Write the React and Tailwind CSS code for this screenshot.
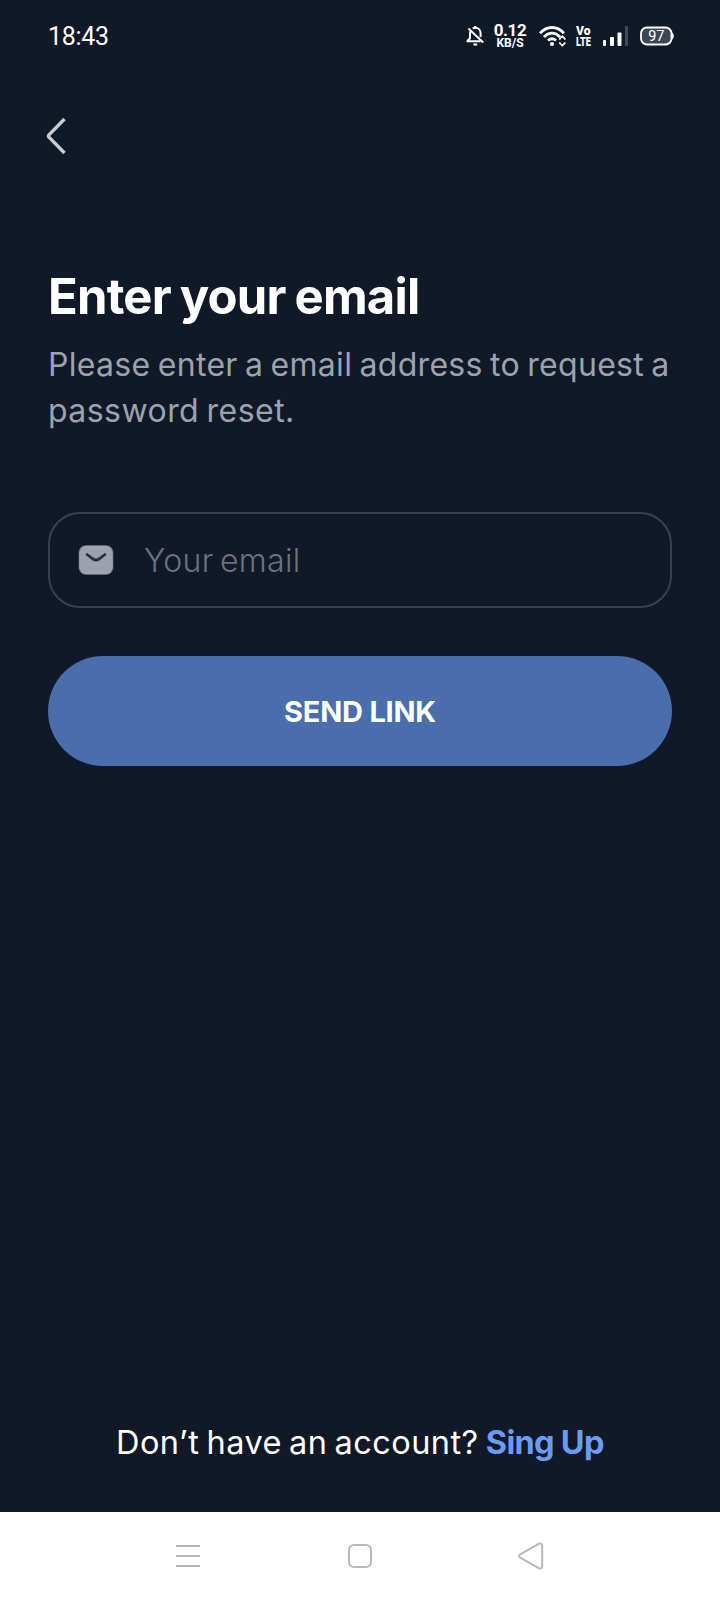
import React from "react";

function StatusBar() {
  return (
    <header className="flex h-[72px] items-center justify-between pr-[46px] pl-12 text-white">
      <span className="text-[25px] leading-none tracking-[-0.3px] font-['Roboto',sans-serif]">18:43</span>
      <div className="flex items-center">
        <svg width="20" height="22" viewBox="0 0 20 22" className="mr-[7px]" fill="none" stroke="white" strokeWidth="2">
          <path d="M4.700 6C4.200 7 4 8 4 9v4.300L1.600 15.600V16.200H14.600M6.800 3.600C7.600 3 8.400 2.800 9.300 2.800C12.500 2.800 14.600 5.200 14.600 8.600V12" />
          <path d="M2.400 3.600L17.200 17.600" />
          <path d="M9.300 1V3M7.400 19.400H11.200" />
        </svg>
        <div className="flex w-[34px] flex-col items-center font-bold font-['Roboto',sans-serif]">
          <span className="text-[17px] leading-[13px] tracking-[-0.4px]">0.12</span>
          <span className="pt-px text-[12px] leading-[10px]">KB/S</span>
        </div>
        <svg width="28" height="22" viewBox="0 0 28 22" className="ml-3" fill="none" stroke="white">
          <path d="M1 8.200C8 .6 18 .6 25 8.200" strokeWidth="2.800" />
          <path d="M5 12C10 6.800 16 6.800 21 12" strokeWidth="2.800" />
          <path d="M9 15.600C11.500 13.200 14.500 13.200 17 15.600" strokeWidth="2.800" />
          <circle cx="13" cy="19" r="2.100" fill="white" stroke="none" />
          <path d="M20.800 14.800V13.600L23.300 11.200L25.800 13.600V14.800M20.800 17.200V18.200L23.300 20.600L25.800 18.200V17.200" strokeWidth="1.600" />
        </svg>
        <svg width="16" height="22" viewBox="0 0 16 22" className="ml-[9px] overflow-visible" fill="white">
          <text x="0" y="9.500" fontSize="12" fontWeight="900" fontFamily="Roboto, sans-serif" textLength="14.500" lengthAdjust="spacingAndGlyphs">Vo</text>
          <text x="0" y="21" fontSize="13" fontWeight="900" fontFamily="Roboto, sans-serif" textLength="15" lengthAdjust="spacingAndGlyphs">LTE</text>
        </svg>
        <svg width="26" height="22" viewBox="0 0 26 22" className="ml-[11px]" fill="white">
          <rect x="0" y="15" width="3" height="6" rx="1" />
          <rect x="7" y="12" width="4" height="9" rx="1" />
          <rect x="14.500" y="7.500" width="4" height="13.500" rx="1" />
          <rect x="22" y="1" width="3" height="20" rx="1" fill="#434955" />
        </svg>
        <svg width="34" height="20" viewBox="0 0 34 20" className="ml-[11px]">
          <rect x="1" y="1.500" width="30.500" height="17" rx="6" fill="#3f4551" stroke="white" strokeWidth="1.800" />
          <path d="M32 6.500C34.400 7.500 34.400 12.500 32 13.500Z" fill="white" />
          <text x="16.300" y="15.200" textAnchor="middle" fontSize="14.500" fill="white" fontFamily="Roboto, sans-serif">97</text>
        </svg>
      </div>
    </header>
  );
}

function NavigationBar() {
  return (
    <nav className="flex h-[88px] items-center justify-between bg-white px-[174px]">
      <svg width="28" height="28" viewBox="0 0 28 28" stroke="#b8b8b8" strokeWidth="2" fill="none">
        <path d="M2 4H26M2 14H26M2 24H26" />
      </svg>
      <svg width="28" height="28" viewBox="0 0 28 28" stroke="#b8b8b8" strokeWidth="2" fill="none">
        <rect x="3" y="3" width="22" height="22" rx="5" />
      </svg>
      <svg width="28" height="28" viewBox="0 0 28 28" stroke="#b8b8b8" strokeWidth="2" fill="none" strokeLinejoin="round">
        <path d="M2.200 12.400L21 1.700Q24.200 .6 24.200 4V24Q24.200 27.400 21 26.300L2.200 15.600Q-.2 14 2.200 12.400Z" />
      </svg>
    </nav>
  );
}

export default function App() {
  return (
    <div className="flex h-[1600px] w-[720px] flex-col bg-[#111827] font-['Inter',sans-serif]">
      <StatusBar />
      <main className="flex flex-1 flex-col px-12">
        <button className="mt-[45px] -ml-[2px] self-start" aria-label="Back">
          <svg width="20" height="38" viewBox="0 0 20 38" fill="none" stroke="#c9cbd1" strokeWidth="3.400">
            <path d="M18.500 2L3 17.800Q2 19 3 20.200L18.500 36" />
          </svg>
        </button>
        <h1 className="mt-[112px] text-[49px] leading-[60px] font-bold tracking-[-0.79px] [word-spacing:-2px] text-white">
          Enter your email
        </h1>
        <p className="mt-[15px] text-[32px] leading-[46px] tracking-[0.3px] [word-spacing:-2px] whitespace-nowrap text-[#9ca3af]">
          Please enter a email address to request a<br />
          <span className="tracking-[0.45px]">password reset.</span>
        </p>
        <label className="mt-[78px] flex h-[96px] items-center rounded-[32px] border-2 border-[#374151] pl-[27px]">
          <svg width="38" height="32" viewBox="0 0 38 32" fill="none">
            <rect x="1.500" y="1" width="35" height="30" rx="7.500" fill="#9ca3af" opacity=".45" />
            <rect x="2.200" y="1.700" width="33.600" height="28.600" rx="7" fill="#9ca3af" />
            <path d="M10 10.500L16 15Q19 17 22 15L28 10.500" stroke="#273040" strokeWidth="2.800" strokeLinecap="round" />
          </svg>
          <input
            type="email"
            placeholder="Your email"
            className="ml-[29px] w-[480px] bg-transparent pt-[2px] text-[32px] font-light tracking-[0.35px] [word-spacing:-3px] text-white outline-none placeholder:text-[#6b7280]"
          />
        </label>
        <button className="mt-12 h-[110px] rounded-[55px] bg-[#4a6dac] pt-px text-[29px] font-bold tracking-[-0.25px] text-white">
          SEND LINK
        </button>
        <p className="mt-auto mb-[46px] pl-[68px] text-[32.5px] leading-[46px] tracking-[0.46px] [word-spacing:-2.5px] whitespace-nowrap text-white">
          Don’t have an account?{" "}
          <a className="font-bold tracking-[-0.7px] [word-spacing:0px] text-[#6b9bf2]">Sing Up</a>
        </p>
      </main>
      <NavigationBar />
    </div>
  );
}
